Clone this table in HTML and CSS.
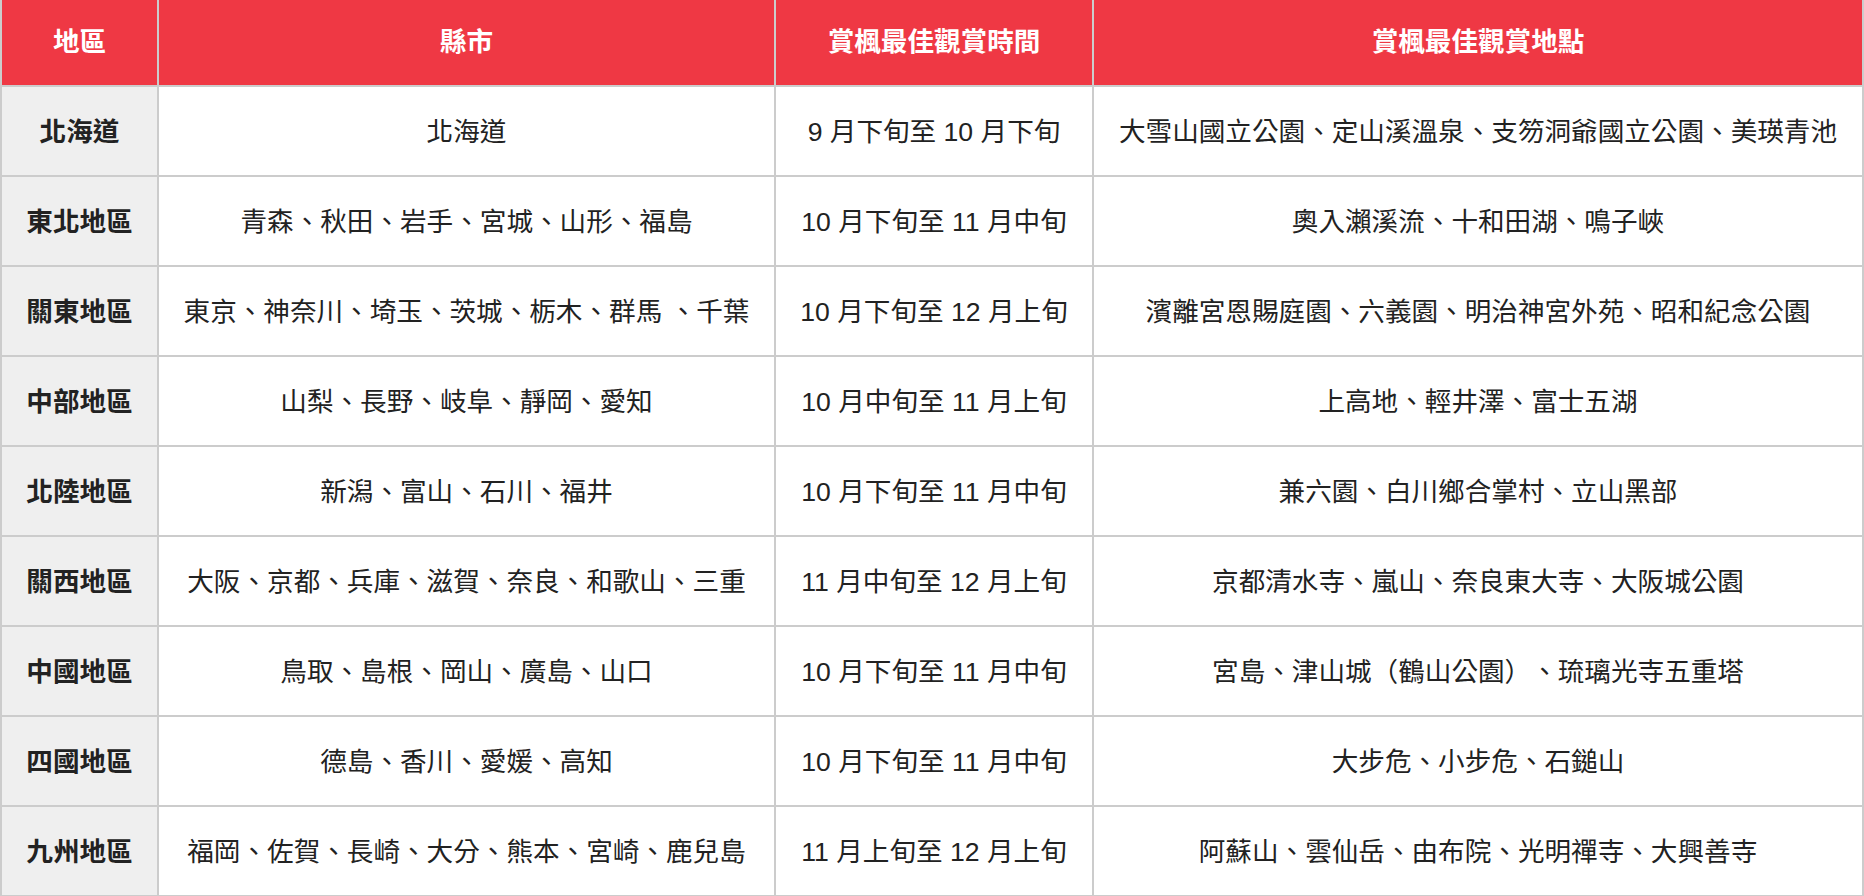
FILE: index.html
```html
<!DOCTYPE html>
<html lang="zh-Hant">
<head>
<meta charset="utf-8">
<title>賞楓</title>
<link rel="stylesheet" href="styles.css">
</head>
<body>
<table class="maple">
  <colgroup>
    <col class="c-region">
    <col class="c-pref">
    <col class="c-time">
    <col class="c-spot">
  </colgroup>
  <thead>
    <tr>
      <th>地區</th>
      <th>縣市</th>
      <th>賞楓最佳觀賞時間</th>
      <th>賞楓最佳觀賞地點</th>
    </tr>
  </thead>
  <tbody>
    <tr><td class="region">北海道</td><td>北海道</td><td>9 月下旬至 10 月下旬</td><td>大雪山國立公園、定山溪溫泉、支笏洞爺國立公園、美瑛青池</td></tr>
    <tr><td class="region">東北地區</td><td>青森、秋田、岩手、宮城、山形、福島</td><td>10 月下旬至 11 月中旬</td><td>奧入瀨溪流、十和田湖、鳴子峽</td></tr>
    <tr><td class="region">關東地區</td><td>東京、神奈川、埼玉、茨城、栃木、群馬 、千葉</td><td>10 月下旬至 12 月上旬</td><td>濱離宮恩賜庭園、六義園、明治神宮外苑、昭和紀念公園</td></tr>
    <tr><td class="region">中部地區</td><td>山梨、長野、岐阜、靜岡、愛知</td><td>10 月中旬至 11 月上旬</td><td>上高地、輕井澤、富士五湖</td></tr>
    <tr><td class="region">北陸地區</td><td>新潟、富山、石川、福井</td><td>10 月下旬至 11 月中旬</td><td>兼六園、白川鄉合掌村、立山黑部</td></tr>
    <tr><td class="region">關西地區</td><td>大阪、京都、兵庫、滋賀、奈良、和歌山、三重</td><td>11 月中旬至 12 月上旬</td><td>京都清水寺、嵐山、奈良東大寺、大阪城公園</td></tr>
    <tr><td class="region">中國地區</td><td>鳥取、島根、岡山、廣島、山口</td><td>10 月下旬至 11 月中旬</td><td>宮島、津山城（鶴山公園）、琉璃光寺五重塔</td></tr>
    <tr><td class="region">四國地區</td><td>德島、香川、愛媛、高知</td><td>10 月下旬至 11 月中旬</td><td>大步危、小步危、石鎚山</td></tr>
    <tr><td class="region">九州地區</td><td>福岡、佐賀、長崎、大分、熊本、宮崎、鹿兒島</td><td>11 月上旬至 12 月上旬</td><td>阿蘇山、雲仙岳、由布院、光明禪寺、大興善寺</td></tr>
  </tbody>
</table>
</body>
</html>
```
FILE: styles.css
```css
html, body {
  margin: 0;
  padding: 0;
  background: #ffffff;
}

body {
  font-family: "Liberation Sans", "Noto Sans CJK TC", sans-serif;
  font-size: 26.6px;
  color: #222222;
  overflow: hidden;
  text-spacing-trim: space-all;
}

.maple {
  border-collapse: collapse;
  table-layout: fixed;
  width: 1864px;
}

.c-region { width: 157px; }
.c-pref { width: 617px; }
.c-time { width: 318px; }
.c-spot { width: 770px; }

.maple th,
.maple td {
  border: 2px solid #cccccc;
  text-align: center;
  vertical-align: middle;
  white-space: nowrap;
  line-height: 1.2;
  text-spacing-trim: space-all;
}

.maple th {
  border-top: none;
  background: #ef3844;
  color: #ffffff;
  font-weight: bold;
  height: 86px;
  padding: 0 4px;
  box-sizing: border-box;
}

.maple td {
  height: 85px;
  padding: 3px 4px 0;
}

.maple td.region {
  background: #efefef;
  font-weight: bold;
}
```
